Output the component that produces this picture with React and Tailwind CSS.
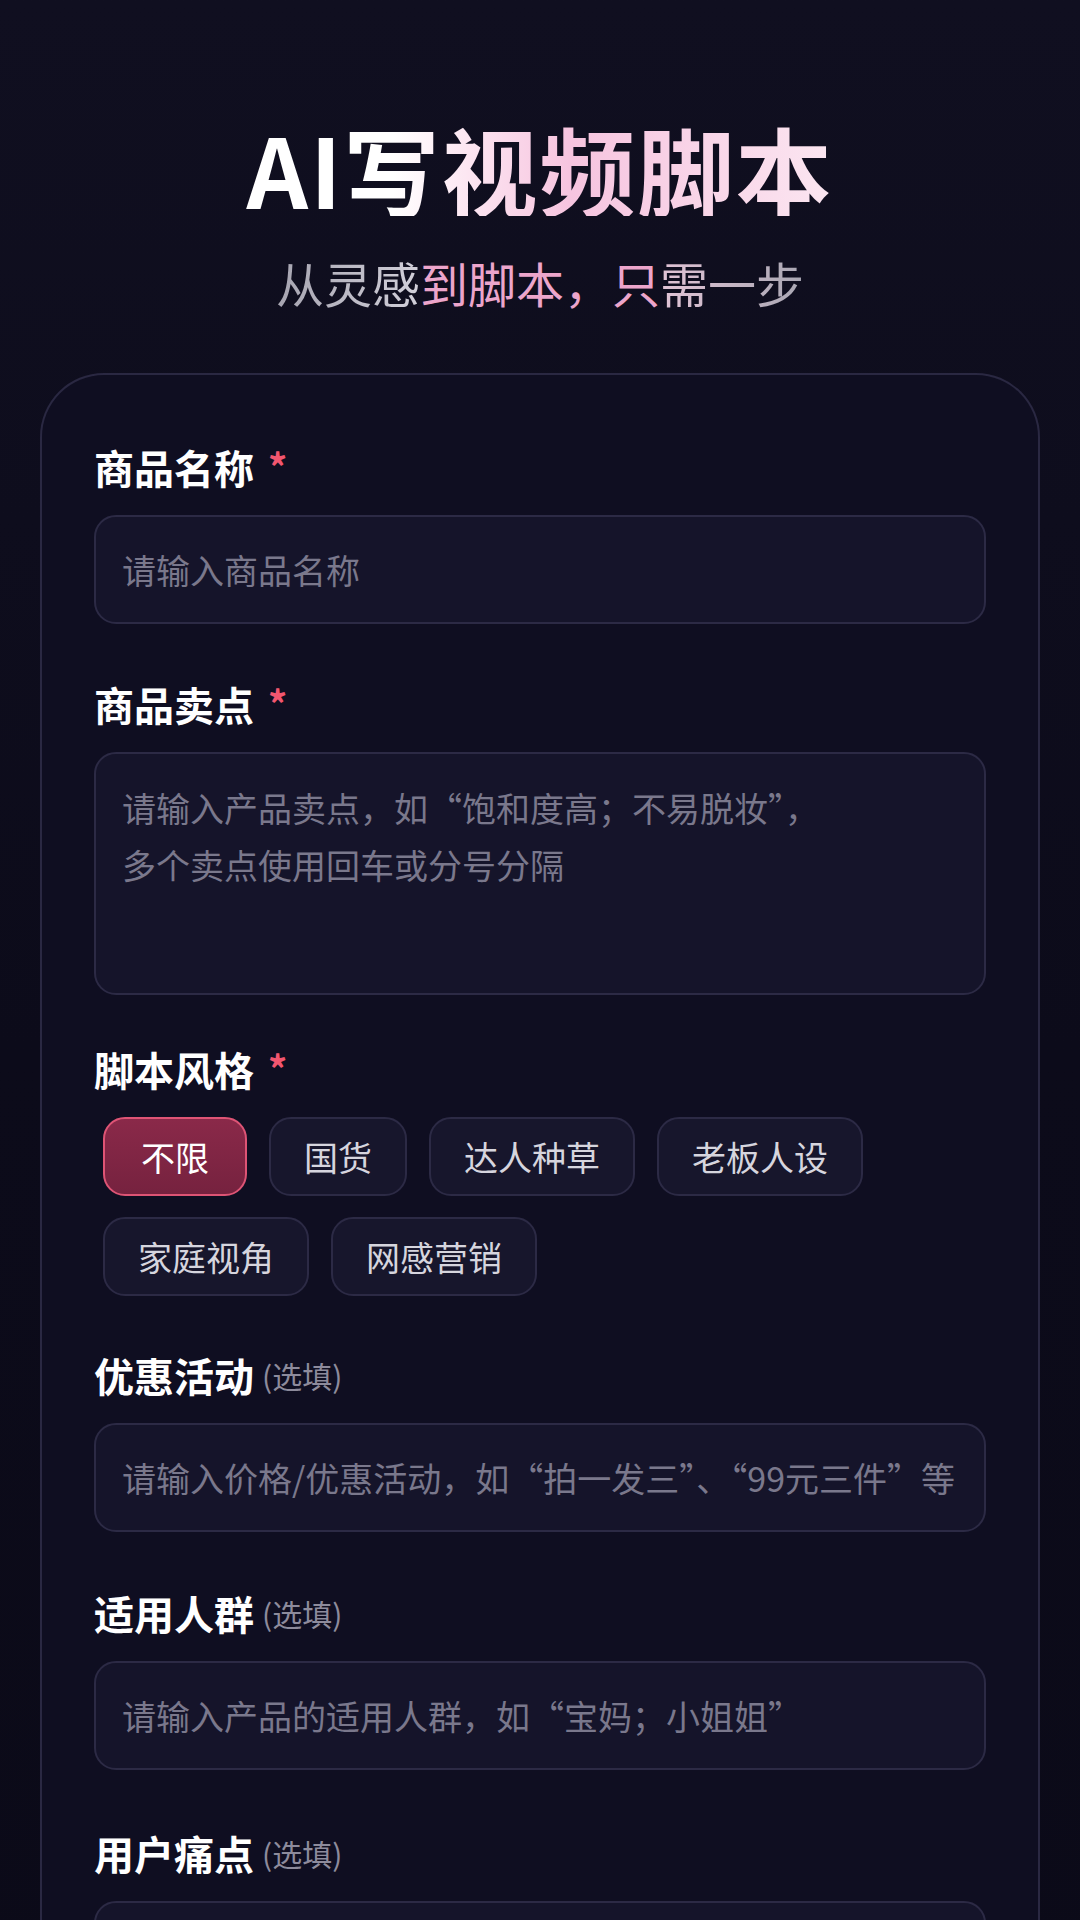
import { useState } from 'react'

const styles = ['不限', '国货', '达人种草', '老板人设', '家庭视角', '网感营销']

function Label({ text, required }) {
  return (
    <div className="flex items-center h-[56px]">
      <span className="text-[40px] leading-[56px] font-bold text-white">{text}</span>
      {required ? (
        <span className="ml-[14px] self-start mt-[7px] text-[38px] leading-[40px] font-bold text-[#f2566f]">*</span>
      ) : (
        <span className="ml-[8px] text-[30px] leading-[56px] text-[#8d8b9c]">(选填)</span>
      )}
    </div>
  )
}

function TextInput({ placeholder }) {
  return (
    <input
      type="text"
      placeholder={placeholder}
      className="mt-5 w-full h-[109px] rounded-[22px] border-2 border-[#2c2a45] bg-[#15142a] px-[26px] text-[34px] text-white outline-none placeholder:text-[#7a788c]"
    />
  )
}

export default function App() {
  const [style, setStyle] = useState('不限')

  return (
    <div className="min-h-screen bg-gradient-to-b from-[#100f20] via-[#0c0b1a] to-[#0b0a18] font-['Noto_Sans_CJK_SC',sans-serif] px-10 pt-[120px] overflow-hidden">
      {/* 标题 */}
      <header className="flex flex-col items-center">
        <h1 className="inline-block text-[96px] leading-[96px] font-bold tracking-[2px] bg-gradient-to-r from-white from-25% via-[#f6c4df] via-55% to-[#fbe6f1] bg-clip-text text-transparent">
          AI写视频脚本
        </h1>
        <p className="mt-[42px] text-[48px] leading-[48px]">
          <span className="bg-gradient-to-r from-[#a6a4b0] to-[#d2d0da] bg-clip-text text-transparent">从灵感</span>
          <span className="text-[#eca5cb]">到脚本，只</span>
          <span className="bg-gradient-to-r from-[#e2c4d6] to-[#a9a7b3] bg-clip-text text-transparent">需一步</span>
        </p>
      </header>

      {/* 表单卡片 */}
      <div className="mt-[67px] rounded-t-[64px] border-2 border-b-0 border-[#2a2842] bg-[#0f0e21] px-[52px] pt-[64px] pb-20">
        <Label text="商品名称" required />
        <TextInput placeholder="请输入商品名称" />

        <div className="mt-[52px]">
          <Label text="商品卖点" required />
          <textarea
            placeholder={'请输入产品卖点，如“饱和度高；不易脱妆”，\n多个卖点使用回车或分号分隔'}
            className="mt-5 block w-full h-[243px] resize-none rounded-[22px] border-2 border-[#2c2a45] bg-[#15142a] px-[26px] pt-[25px] text-[34px] leading-[57px] text-white outline-none placeholder:text-[#7a788c]"
          />
        </div>

        <div className="mt-[46px]">
          <Label text="脚本风格" required />
          <div className="mt-[20px] ml-[9px] flex flex-wrap gap-x-[22px] gap-y-[21px]">
            {styles.map((s) => (
              <button
                key={s}
                onClick={() => setStyle(s)}
                className={
                  s === style
                    ? 'h-[79px] rounded-[22px] border-2 border-[#de5475] bg-gradient-to-b from-[#8a2949] to-[#76223f] px-[36px] text-[34px] text-white'
                    : 'h-[79px] rounded-[22px] border-2 border-[#2c2a45] bg-[#17162c] px-[33px] text-[34px] text-[#d6d5de]'
                }
              >
                {s}
              </button>
            ))}
          </div>
        </div>

        <div className="mt-[51px]">
          <Label text="优惠活动" />
          <TextInput placeholder="请输入价格/优惠活动，如“拍一发三”、“99元三件”等" />
        </div>

        <div className="mt-[53px]">
          <Label text="适用人群" />
          <TextInput placeholder="请输入产品的适用人群，如“宝妈；小姐姐”" />
        </div>

        <div className="mt-[55px]">
          <Label text="用户痛点" />
          <TextInput placeholder="请输入用户痛点" />
        </div>
      </div>
    </div>
  )
}
